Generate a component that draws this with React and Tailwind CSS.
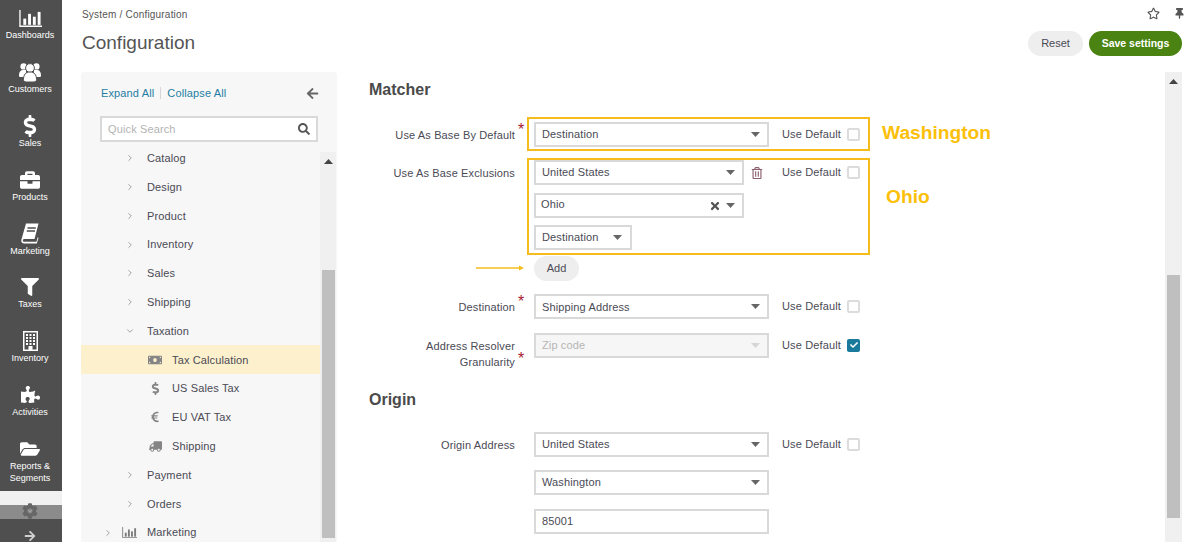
import React from "react";
import { FaDollarSign, FaBriefcase, FaFilter, FaPuzzlePiece, FaFolderOpen, FaCog, FaArrowRight, FaArrowLeft, FaSearch, FaMoneyBill, FaEuroSign, FaTruck, FaTimes, FaRegTrashAlt, FaRegStar, FaThumbtack, FaCheck } from "react-icons/fa";
import { ChevronRight, ChevronDown } from "lucide-react";

function BarsIcon({ size = 24, color = "#fff" }) {
  return (
    <svg width={size} height={size * 0.75} viewBox="0 0 24 18" fill="none">
      <path d="M1 0V17H24" stroke={color} strokeWidth="1.4" />
      <rect x="4.5" y="9" width="3" height="6.5" fill={color} />
      <rect x="9.5" y="4" width="3" height="11.5" fill={color} />
      <rect x="14.5" y="7" width="3" height="8.5" fill={color} />
      <rect x="19.5" y="2" width="3" height="13.5" fill={color} />
    </svg>
  );
}

function UsersIcon() {
  return (
    <svg width="22" height="20" viewBox="0 0 22 20">
      <circle cx="4.6" cy="4.4" r="3.2" fill="#fff" />
      <circle cx="17.4" cy="4.4" r="3.2" fill="#fff" />
      <path d="M0 13c0-3 1.5-5 4-5h3v7H1c-.6 0-1-.5-1-2zM22 13c0-3-1.5-5-4-5h-3v7h6c.6 0 1-.5 1-2z" fill="#fff" />
      <circle cx="11" cy="6" r="4.4" fill="#fff" stroke="#4f4f4f" strokeWidth="1" />
      <path d="M4.5 17.5c0-5 2.3-7.5 6.5-7.5s6.5 2.5 6.5 7.5c0 1.5-1 2.5-2.5 2.5H7c-1.5 0-2.5-1-2.5-2.5z" fill="#fff" stroke="#4f4f4f" strokeWidth="1" />
    </svg>
  );
}

function BookIcon() {
  return (
    <svg width="18" height="21" viewBox="0 0 18 21">
      <path d="M5 0.5H17.5L13.5 16H3.5C2.5 16 1.8 16.7 1.8 17.4C1.8 18.3 2.5 18.8 3.5 18.8H15.5L16.8 14L17.5 15L15.8 20.5H3.2C1.3 20.5 0 19 0.3 17Z" fill="#fff" />
      <path d="M6.5 5H14.8M5.8 8H14" stroke="#4f4f4f" strokeWidth="1.3" />
    </svg>
  );
}

function BuildingIcon() {
  return (
    <svg width="15" height="20" viewBox="0 0 15 20">
      <rect x="0.75" y="0.75" width="13.5" height="18.5" fill="none" stroke="#fff" strokeWidth="1.5" />
      {[3, 6.5, 10].map((x) =>
        [3, 6, 9, 12].map((y) => <rect key={`${x}-${y}`} x={x} y={y} width="2" height="2" fill="#fff" />)
      )}
      <rect x="5.5" y="15" width="4" height="4" fill="#fff" />
    </svg>
  );
}

function NavItem({ icon, children }) {
  return (
    <div className="h-[53.8px] flex flex-col items-center pt-[8.4px] pr-[2px] shrink-0">
      <div className="h-[20px] flex items-center justify-center text-white">{icon}</div>
      <div className="mt-[1px] text-[9px] leading-[12px] text-white text-center">{children}</div>
    </div>
  );
}

function Caret({ className = "" }) {
  return (
    <svg width="9" height="5" viewBox="0 0 9 5" className={className}>
      <polygon points="0,0 9,0 4.5,5" fill="currentColor" />
    </svg>
  );
}

function TreeRow({ label, open, icon, indent, active }) {
  return (
    <div className={`h-[28.8px] shrink-0 flex items-center ${active ? "bg-[#fdf0cd]" : ""}`}>
      {indent === 1 && (
        <>
          <span className="w-[55px] flex justify-end pr-[1px] text-[#777]">
            {open ? <ChevronDown size={10} strokeWidth={1.6} /> : <ChevronRight size={10} strokeWidth={1.6} />}
          </span>
          <span className="w-[11px]" />
        </>
      )}
      {indent === 2 && (
        <>
          <span className="w-[62px]" />
          <span className="w-[24px] flex justify-center text-[#858585]">{icon}</span>
          <span className="w-[5px]" />
        </>
      )}
      {indent === 3 && (
        <>
          <span className="w-[32px] flex justify-end text-[#777]"><ChevronRight size={10} strokeWidth={1.6} /></span>
          <span className="w-[8px]" />
          <span className="w-[16px] flex justify-center"><BarsIcon size={15} color="#7b7b7b" /></span>
          <span className="w-[10px]" />
        </>
      )}
      <span className="text-[11px] text-[#4a4a55] tracking-[0.012em]">{label}</span>
    </div>
  );
}

function Select({ value, width = "w-[235px]", disabled, clear, caretRight = "mr-[7px]", textClass = "pl-[6px]" }) {
  return (
    <div className={`${width} h-[25px] shrink-0 border-2 border-[#d9d9d9] flex items-center ${disabled ? "bg-[#f6f6f6] text-[#b5b5b5]" : "bg-white text-[#4a4a55]"}`}>
      <span className={`flex-1 text-[11px] tracking-[0.012em] whitespace-nowrap ${textClass}`}>{value}</span>
      {clear && <FaTimes size={12} className="text-[#555] mr-[5px]" />}
      <Caret className={`${caretRight} ${disabled ? "text-[#d5d5d5]" : "text-[#666]"}`} />
    </div>
  );
}

function Field({ label, required, children, def, checked, twoLine, className = "" }) {
  return (
    <div className={`flex items-start ${className}`}>
      <div className="w-[146px] shrink-0 text-right text-[11px] leading-[16px] text-[#4a4a55] pt-[5px] tracking-[0.012em]">{label}</div>
      <div className={`w-[19px] shrink-0 text-[16px] leading-[16px] text-[#a8182c] pl-[3px] ${twoLine ? "pt-[18px]" : "pt-[0px]"}`}>{required ? "*" : ""}</div>
      <div className="w-[235px] shrink-0">{children}</div>
      {def && (
        <div className="ml-[13px] h-[24px] flex items-center w-[78px] justify-between">
          <span className="text-[11px] text-[#4a4a55] tracking-[0.012em] whitespace-nowrap">Use Default</span>
          <span className={`w-[13px] h-[13px] rounded-[2px] flex items-center justify-center ${checked ? "bg-[#1a7a9c]" : "border-2 border-[#dcdcdc] bg-white"}`}>
            {checked && <FaCheck size={8} className="text-white" />}
          </span>
        </div>
      )}
    </div>
  );
}

export default function App() {
  return (
    <div className="w-[1187px] h-[542px] flex overflow-hidden bg-white font-['Liberation_Sans',Arial,sans-serif]">
      <aside className="w-[62px] shrink-0 h-full bg-[#4f4f4f] flex flex-col">
        <NavItem icon={<BarsIcon size={23} />}>Dashboards</NavItem>
        <NavItem icon={<UsersIcon />}>Customers</NavItem>
        <NavItem icon={<FaDollarSign size={22} />}>Sales</NavItem>
        <NavItem icon={<FaBriefcase size={20} />}>Products</NavItem>
        <NavItem icon={<BookIcon />}>Marketing</NavItem>
        <NavItem icon={<FaFilter size={18} />}>Taxes</NavItem>
        <NavItem icon={<BuildingIcon />}>Inventory</NavItem>
        <NavItem icon={<FaPuzzlePiece size={19} />}>Activities</NavItem>
        <NavItem icon={<FaFolderOpen size={20} />}>
          Reports &amp;
          <br />
          Segments
        </NavItem>
        <div className="relative mt-[6.8px] flex-1">
          <div className="h-[14px] bg-[#f1f1f1]" />
          <div className="h-[14px] bg-[#8b8b8b]" />
          <FaCog size={16} className="absolute left-[22px] top-[12px] text-[#666]" />
          <ChevronDown size={8} strokeWidth={2.5} className="absolute left-[26px] top-[16px] text-[#a8a8a8]" />
          <div className="flex justify-center pt-[11px] pr-[2px]"><FaArrowRight size={12} className="text-[#d0d0d0]" /></div>
        </div>
      </aside>

      <main className="flex-1 min-w-0 flex flex-col pl-[19px] pr-[5px]">
        <header className="h-[72px] shrink-0 flex justify-between">
          <div className="pl-[1px]">
            <div className="pt-[9px] text-[10px] leading-[12px] text-[#555] tracking-[0.02em]">System / Configuration</div>
            <h1 className="mt-[10px] text-[19px] leading-[24px] font-normal text-[#555]">Configuration</h1>
          </div>
          <div className="flex flex-col items-end">
            <div className="flex items-center h-[13px] mt-[7px] gap-[14px] -mr-[3px]">
              <FaRegStar size={13} className="text-[#555]" />
              <FaThumbtack size={11} className="text-[#555]" />
            </div>
            <div className="flex gap-[6px] mt-[11px]">
              <button className="w-[55px] h-[25px] rounded-full bg-[#eeeeee] text-[11px] text-[#4a4a55]">Reset</button>
              <button className="w-[93px] h-[25px] rounded-full bg-[#4a8311] text-[10.5px] font-bold text-white">Save settings</button>
            </div>
          </div>
        </header>

        <div className="flex-1 min-h-0 flex">
          <section className="w-[256px] shrink-0 h-full bg-[#f7f7f7] rounded-t-[3px] flex flex-col">
            <div className="h-[80px] shrink-0 pl-[19px] pr-[19px]">
              <div className="h-[42px] mb-[2px] flex items-center justify-between">
                <div className="flex items-center ml-[1px] text-[11px] text-[#1f7ea3] tracking-[0.012em]">
                  <span>Expand All</span>
                  <span className="mx-[6px] h-[12px] w-px bg-[#d5d5d5]" />
                  <span>Collapse All</span>
                </div>
                <FaArrowLeft size={13} className="text-[#666] -mr-[1px]" />
              </div>
              <div className="h-[26px] border-2 border-[#d9d9d9] bg-white flex items-center pl-[6px] pr-[6px]">
                <span className="flex-1 text-[11px] text-[#b3b3b3] tracking-[0.012em]">Quick Search</span>
                <FaSearch size={12} className="text-[#555]" />
              </div>
            </div>
            <div className="flex-1 min-h-0 flex overflow-hidden">
              <div className="w-[239px] shrink-0 flex flex-col -mt-[8.2px]">
                <TreeRow indent={1} label="Catalog" />
                <TreeRow indent={1} label="Design" />
                <TreeRow indent={1} label="Product" />
                <TreeRow indent={1} label="Inventory" />
                <TreeRow indent={1} label="Sales" />
                <TreeRow indent={1} label="Shipping" />
                <TreeRow indent={1} label="Taxation" open />
                <TreeRow indent={2} label="Tax Calculation" active icon={<FaMoneyBill size={14} />} />
                <TreeRow indent={2} label="US Sales Tax" icon={<FaDollarSign size={13} />} />
                <TreeRow indent={2} label="EU VAT Tax" icon={<FaEuroSign size={12} />} />
                <TreeRow indent={2} label="Shipping" icon={<FaTruck size={13} className="-scale-x-100" />} />
                <TreeRow indent={1} label="Payment" />
                <TreeRow indent={1} label="Orders" />
                <TreeRow indent={3} label="Marketing" />
              </div>
              <div className="w-[16px] shrink-0 bg-[#f0f0f0] flex flex-col items-center">
                <Caret className="mt-[7px] rotate-180 text-[#444]" />
                <div className="mt-[106px] w-[13px] h-[268px] bg-[#bfbfbf]" />
              </div>
            </div>
          </section>

          <section className="relative flex-1 min-w-0 flex overflow-hidden">
            <div className="flex-1 min-w-0 pl-[32px] pt-[8px]">
              <h2 className="h-[20px] text-[16px] leading-[20px] font-bold text-[#4a4a4a]">Matcher</h2>
              <Field className="mt-[22px]" label="Use As Base By Default" required def>
                <Select value="Destination" />
              </Field>
              <Field className="mt-[13px]" label="Use As Base Exclusions" def>
                <div className="flex items-center">
                  <Select value="United States" width="w-[210px]" />
                  <FaRegTrashAlt size={12} className="ml-[7px] text-[#8a5c6c]" />
                </div>
                <div className="mt-[8px]"><Select value="Ohio" width="w-[210px]" clear textClass="pl-[5px] pb-[2px]" /></div>
                <div className="mt-[7px]"><Select value="Destination" width="w-[98px]" caretRight="mr-[8px]" /></div>
                <button className="mt-[6px] w-[45px] h-[25px] rounded-full bg-[#eeeeee] text-[11px] text-[#4a4a55]">Add</button>
              </Field>
              <Field className="mt-[13px]" label="Destination" required def>
                <Select value="Shipping Address" textClass="pl-[6px] pt-[1px]" />
              </Field>
              <Field className="mt-[14px] h-[39px]" label={<>Address Resolver<br />Granularity</>} required twoLine def checked>
                <Select value="Zip code" disabled />
              </Field>
              <h2 className="mt-[18px] h-[20px] text-[16px] leading-[20px] font-bold text-[#4a4a4a]">Origin</h2>
              <Field className="mt-[22px]" label="Origin Address" def>
                <Select value="United States" />
                <div className="mt-[13px]"><Select value="Washington" /></div>
                <div className="mt-[14px] w-[235px] h-[25px] border-2 border-[#d9d9d9] flex items-center pl-[6px] text-[11px] text-[#4a4a55] tracking-[0.012em]">85001</div>
              </Field>
            </div>

            <div className="w-[17px] shrink-0 h-full bg-[#f0f0f0] flex flex-col items-center">
              <Caret className="mt-[7px] rotate-180 text-[#444]" />
              <div className="mt-[191px] w-[13px] h-[243px] bg-[#bfbfbf]" />
            </div>

            <div className="absolute left-[190px] top-[45px] w-[343px] h-[34px] border-2 border-[#f5bc1c] pointer-events-none" />
            <div className="absolute left-[190px] top-[86px] w-[343px] h-[97px] border-2 border-[#f5bc1c] pointer-events-none" />
            <div className="absolute left-[545px] top-[49px] text-[19.2px] leading-[24px] font-bold text-[#fcc00a]">Washington</div>
            <div className="absolute left-[549px] top-[113px] text-[19.2px] leading-[24px] font-bold text-[#fcc00a]">Ohio</div>
            <svg className="absolute left-[139px] top-[192px]" width="48" height="8" viewBox="0 0 48 8">
              <path d="M0 4H43" stroke="#f5bc1c" strokeWidth="1.5" />
              <polygon points="43,1.5 48,4 43,6.5" fill="#f5bc1c" />
            </svg>
          </section>
        </div>
      </main>
    </div>
  );
}
